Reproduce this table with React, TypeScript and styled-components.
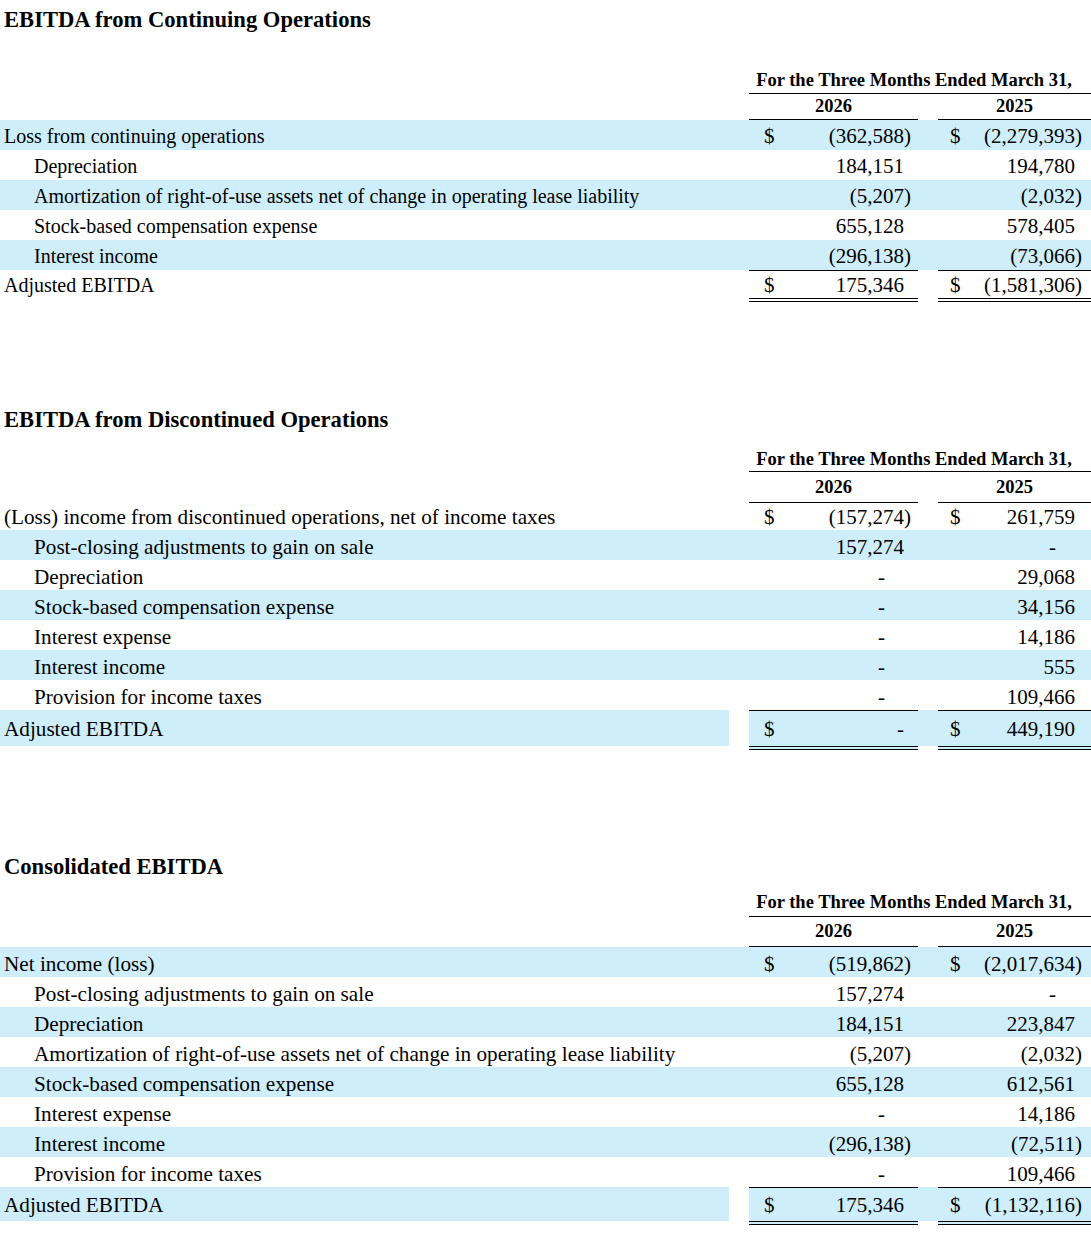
import React from 'react';
import styled, { createGlobalStyle, css } from 'styled-components';

const BLUE = '#cfeefb';
const SERIF = '"Liberation Serif", "Times New Roman", Times, serif';

const GlobalStyle = createGlobalStyle`
  html, body { margin: 0; padding: 0; background: #ffffff; }
  body { font-family: ${SERIF}; color: #000000; }
`;

type RowData = {
  label: string;
  indent?: boolean;
  blue?: boolean;
  dollar?: boolean;
  total?: boolean;
  a: string;
  b: string;
};

type Metrics = { pt: number; lh: number };

type Spec = {
  title: string;
  titleMt: number;
  tableMt: number;
  labelSize: number;
  h1: { lh: number; pb: number };
  h2: { lh: number; pb: number };
  row: Metrics;
  firstRow?: Metrics;
  total: Metrics & { blue: boolean };
  rows: RowData[];
};

const Page = styled.main`
  display: flex;
  flex-direction: column;
  width: 1091px;
`;

const Section = styled.section<{ $mt: number }>`
  display: flex;
  flex-direction: column;
  margin-top: ${(p) => p.$mt}px;
`;

const Title = styled.h2`
  margin: 0;
  padding-left: 4px;
  font-family: ${SERIF};
  font-weight: bold;
  font-size: 22.6px;
  line-height: 28px;
  white-space: nowrap;
`;

const Table = styled.table<{ $mt: number }>`
  margin-top: ${(p) => p.$mt}px;
  width: 1091px;
  table-layout: fixed;
  border-collapse: separate;
  border-spacing: 0;
  font-family: ${SERIF};
`;

const Col = styled.col<{ $w: number }>`
  width: ${(p) => p.$w}px;
`;

const HeadCell = styled.th<{ $lh: number; $pb: number; $padR?: number }>`
  padding: 0 ${(p) => p.$padR ?? 0}px ${(p) => p.$pb}px 0;
  font-size: 18.5px;
  font-weight: bold;
  line-height: ${(p) => p.$lh}px;
  text-align: center;
  white-space: nowrap;
  vertical-align: top;
  border-bottom: 1px solid #000000;
`;

const EmptyHead = styled.td`
  padding: 0;
`;

const blueBg = css<{ $blue?: boolean }>`
  background: ${(p) => (p.$blue ? BLUE : 'transparent')};
`;

const totalSide = css<{ $total?: boolean; $blue?: boolean }>`
  ${(p) =>
    p.$total &&
    css`
      border-top: 1px solid transparent;
      border-bottom: 4px solid ${p.$blue ? '#ffffff' : 'transparent'};
    `}
`;

const LabelCell = styled.td<{
  $blue?: boolean;
  $indent?: boolean;
  $size: number;
  $pt: number;
  $lh: number;
  $total?: boolean;
}>`
  ${blueBg};
  ${totalSide};
  padding: ${(p) => p.$pt}px 0 0 ${(p) => (p.$indent ? 34 : 4)}px;
  font-size: ${(p) => p.$size}px;
  line-height: ${(p) => p.$lh}px;
  white-space: nowrap;
  vertical-align: top;
`;

const Spacer = styled.td<{ $blue?: boolean; $total?: boolean }>`
  ${blueBg};
  ${totalSide};
  padding: 0;
`;

const MoneyCell = styled.td<{
  $blue?: boolean;
  $pt: number;
  $lh: number;
  $pl: number;
  $pr: number;
  $total?: boolean;
}>`
  ${blueBg};
  padding: ${(p) => p.$pt}px ${(p) => p.$pr}px 0 ${(p) => p.$pl}px;
  font-size: 21px;
  line-height: ${(p) => p.$lh}px;
  white-space: nowrap;
  vertical-align: top;
  ${(p) =>
    p.$total &&
    css`
      border-top: 1px solid #000000;
      border-bottom: 4px double #000000;
    `}
`;

const MoneyLine = styled.div`
  display: flex;
  justify-content: space-between;
  align-items: baseline;
`;

const Amount = styled.span<{ $dash?: boolean }>`
  margin-left: auto;
  padding-right: ${(p) => (p.$dash ? 19 : 0)}px;
`;

const Phantom = styled.span`
  visibility: hidden;
`;

const Money: React.FC<{ value: string; dollar?: boolean; total?: boolean }> = ({
  value,
  dollar,
  total,
}) => {
  const neg = value.endsWith(')');
  const dash = value === '-' && !total;
  return (
    <MoneyLine>
      {dollar && <span>$</span>}
      <Amount $dash={dash}>
        {value}
        {!neg && <Phantom>)</Phantom>}
      </Amount>
    </MoneyLine>
  );
};

const FinancialTable: React.FC<{ spec: Spec }> = ({ spec }) => {
  return (
    <Section $mt={spec.titleMt}>
      <Title>{spec.title}</Title>
      <Table $mt={spec.tableMt}>
        <colgroup>
          <Col $w={729} />
          <Col $w={20} />
          <Col $w={169} />
          <Col $w={20} />
          <Col $w={153} />
        </colgroup>
        <thead>
          <tr>
            <EmptyHead />
            <EmptyHead />
            <HeadCell colSpan={3} $lh={spec.h1.lh} $pb={spec.h1.pb} $padR={12}>
              For the Three Months Ended March 31,
            </HeadCell>
          </tr>
          <tr>
            <EmptyHead />
            <EmptyHead />
            <HeadCell $lh={spec.h2.lh} $pb={spec.h2.pb}>
              2026
            </HeadCell>
            <EmptyHead />
            <HeadCell $lh={spec.h2.lh} $pb={spec.h2.pb}>
              2025
            </HeadCell>
          </tr>
        </thead>
        <tbody>
          {spec.rows.map((r, i) => {
            const m: Metrics = r.total
              ? spec.total
              : i === 0 && spec.firstRow
              ? spec.firstRow
              : spec.row;
            const blue = r.total ? spec.total.blue : !!r.blue;
            return (
              <tr key={r.label + i}>
                <LabelCell
                  $blue={blue}
                  $indent={r.indent}
                  $size={spec.labelSize}
                  $pt={m.pt}
                  $lh={m.lh}
                  $total={r.total}
                >
                  {r.label}
                </LabelCell>
                <Spacer $blue={r.total ? false : blue} />
                <MoneyCell $blue={blue} $pt={m.pt} $lh={m.lh} $pl={15} $pr={7} $total={r.total}>
                  <Money value={r.a} dollar={r.dollar} total={r.total} />
                </MoneyCell>
                <Spacer $blue={blue} $total={r.total} />
                <MoneyCell $blue={blue} $pt={m.pt} $lh={m.lh} $pl={12} $pr={9} $total={r.total}>
                  <Money value={r.b} dollar={r.dollar} total={r.total} />
                </MoneyCell>
              </tr>
            );
          })}
        </tbody>
      </Table>
    </Section>
  );
};

const AMORT = 'Amortization of right-of-use assets net of change in operating lease liability';

const continuing: Spec = {
  title: 'EBITDA from Continuing Operations',
  titleMt: 6,
  tableMt: 33,
  labelSize: 20,
  h1: { lh: 26, pb: 0 },
  h2: { lh: 25, pb: 0 },
  row: { pt: 2, lh: 28 },
  total: { pt: 1, lh: 26, blue: false },
  rows: [
    { label: 'Loss from continuing operations', blue: true, dollar: true, a: '(362,588)', b: '(2,279,393)' },
    { label: 'Depreciation', indent: true, a: '184,151', b: '194,780' },
    { label: AMORT, indent: true, blue: true, a: '(5,207)', b: '(2,032)' },
    { label: 'Stock-based compensation expense', indent: true, a: '655,128', b: '578,405' },
    { label: 'Interest income', indent: true, blue: true, a: '(296,138)', b: '(73,066)' },
    { label: 'Adjusted EBITDA', total: true, dollar: true, a: '175,346', b: '(1,581,306)' },
  ],
};

const discontinued: Spec = {
  title: 'EBITDA from Discontinued Operations',
  titleMt: 104,
  tableMt: 14,
  labelSize: 21.2,
  h1: { lh: 23, pb: 0 },
  h2: { lh: 30, pb: 0 },
  row: { pt: 4, lh: 26 },
  firstRow: { pt: 1, lh: 26 },
  total: { pt: 2, lh: 33, blue: true },
  rows: [
    {
      label: '(Loss) income from discontinued operations, net of income taxes',
      dollar: true,
      a: '(157,274)',
      b: '261,759',
    },
    { label: 'Post-closing adjustments to gain on sale', indent: true, blue: true, a: '157,274', b: '-' },
    { label: 'Depreciation', indent: true, a: '-', b: '29,068' },
    { label: 'Stock-based compensation expense', indent: true, blue: true, a: '-', b: '34,156' },
    { label: 'Interest expense', indent: true, a: '-', b: '14,186' },
    { label: 'Interest income', indent: true, blue: true, a: '-', b: '555' },
    { label: 'Provision for income taxes', indent: true, a: '-', b: '109,466' },
    { label: 'Adjusted EBITDA', total: true, dollar: true, a: '-', b: '449,190' },
  ],
};

const consolidated: Spec = {
  title: 'Consolidated EBITDA',
  titleMt: 103,
  tableMt: 9,
  labelSize: 21.2,
  h1: { lh: 24, pb: 2 },
  h2: { lh: 29, pb: 0 },
  row: { pt: 4, lh: 26 },
  total: { pt: 2, lh: 31, blue: true },
  rows: [
    { label: 'Net income (loss)', blue: true, dollar: true, a: '(519,862)', b: '(2,017,634)' },
    { label: 'Post-closing adjustments to gain on sale', indent: true, a: '157,274', b: '-' },
    { label: 'Depreciation', indent: true, blue: true, a: '184,151', b: '223,847' },
    { label: AMORT, indent: true, a: '(5,207)', b: '(2,032)' },
    { label: 'Stock-based compensation expense', indent: true, blue: true, a: '655,128', b: '612,561' },
    { label: 'Interest expense', indent: true, a: '-', b: '14,186' },
    { label: 'Interest income', indent: true, blue: true, a: '(296,138)', b: '(72,511)' },
    { label: 'Provision for income taxes', indent: true, a: '-', b: '109,466' },
    { label: 'Adjusted EBITDA', total: true, dollar: true, a: '175,346', b: '(1,132,116)' },
  ],
};

export default function App() {
  return (
    <>
      <GlobalStyle />
      <Page>
        <FinancialTable spec={continuing} />
        <FinancialTable spec={discontinued} />
        <FinancialTable spec={consolidated} />
      </Page>
    </>
  );
}
